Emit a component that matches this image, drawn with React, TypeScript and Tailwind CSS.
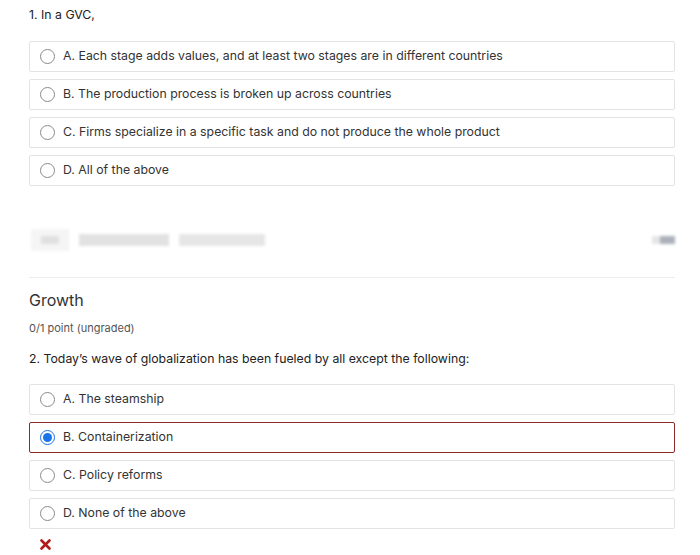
const Q1 = [
  'A. Each stage adds values, and at least two stages are in different countries',
  'B. The production process is broken up across countries',
  'C. Firms specialize in a specific task and do not produce the whole product',
  'D. All of the above',
]

const Q2 = ['A. The steamship', 'B. Containerization', 'C. Policy reforms', 'D. None of the above']

function Option({ label, selected = false, wrong = false }: { label: string; selected?: boolean; wrong?: boolean }) {
  return (
    <div
      className={[
        'flex items-center h-[31px] pl-[10px] rounded-[2px] border',
        wrong ? 'border-[#8b2a2a]' : 'border-[#e3e3e3]',
      ].join(' ')}
    >
      {selected ? (
        <span className="w-[15px] h-[15px] rounded-full border-[1.5px] border-[#1a73e8] flex items-center justify-center">
          <span className="w-[9px] h-[9px] rounded-full bg-[#1a73e8]" />
        </span>
      ) : (
        <span className="w-[15px] h-[15px] rounded-full border border-[#8a8a8a]" />
      )}
      <span className="ml-[8px] text-[12.3px] text-[#333]">{label}</span>
    </div>
  )
}

export default function App() {
  return (
    <div className="w-[700px] h-[555px] bg-white overflow-hidden pl-[29px] pr-[25px] font-['Inter',sans-serif]">
      <p className="pt-[6px] text-[12.3px] text-[#222] leading-[18px]">1. In a GVC,</p>

      <div className="mt-[17px] flex flex-col gap-[7px]">
        {Q1.map(o => <Option key={o} label={o} />)}
      </div>

      {/* blurred row */}
      <div className="mt-[42px] h-[24px] flex items-center justify-between blur-[1.5px]">
        <div className="flex items-center gap-[10px] ml-[2px]">
          <span className="w-[38px] h-[22px] bg-[#f5f5f5] flex items-center justify-center">
            <span className="w-[18px] h-[8px] bg-[#e0e0e0]" />
          </span>
          <span className="w-[90px] h-[12px] bg-[#e2e2e2]" />
          <span className="w-[86px] h-[12px] bg-[#e6e6e6]" />
        </div>
        <div className="flex items-center">
          <span className="w-[8px] h-[8px] bg-[#e6e6e6]" />
          <span className="w-[15px] h-[8px] bg-[#aab1b9]" />
        </div>
      </div>

      <div className="mt-[25px] border-t border-[#ececec]" />

      <h2 className="mt-[11px] text-[16px] text-[#333] leading-[22px]">Growth</h2>
      <p className="mt-[10px] text-[11px] text-[#555] leading-[14px]">0/1 point (ungraded)</p>
      <p className="mt-[15px] text-[12.3px] text-[#222] leading-[18px]">
        2. Today’s wave of globalization has been fueled by all except the following:
      </p>

      <div className="mt-[16px] flex flex-col gap-[7px]">
        {Q2.map((o, i) => <Option key={o} label={o} selected={i === 1} wrong={i === 1} />)}
      </div>

      <svg className="mt-[10px] ml-[11px]" width="11" height="11" viewBox="0 0 11 11">
        <path d="M1.5 1.5 L9.5 9.5 M9.5 1.5 L1.5 9.5" stroke="#b11a1a" strokeWidth="2.6" strokeLinecap="round" />
      </svg>
    </div>
  )
}
